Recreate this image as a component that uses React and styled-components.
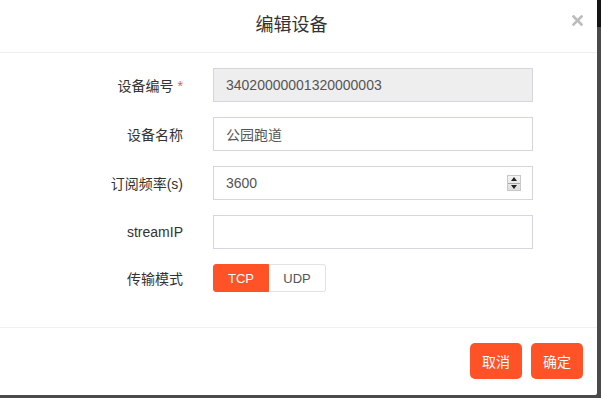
import React, { useState } from "react";
import styled, { createGlobalStyle } from "styled-components";

const GlobalStyle = createGlobalStyle`
  html, body { margin: 0; padding: 0; }
  body {
    font-family: "Liberation Sans", "Noto Sans CJK SC", Arial, sans-serif;
    background: #484848;
  }
  * { box-sizing: border-box; }
`;

const Page = styled.div`
  width: 601px;
  height: 398px;
  background: linear-gradient(#141414 0 27px, #4a4a4a 27px);
  overflow: hidden;
`;

const Dialog = styled.div`
  width: 597px;
  height: 395px;
  background: #fff;
  display: flex;
  flex-direction: column;
  border-bottom-right-radius: 2px;
`;

const Header = styled.div`
  position: relative;
  height: 53px;
  border-bottom: 1px solid #eeeeee;
  display: flex;
  align-items: center;
  justify-content: center;
  padding-bottom: 6px;
`;

const Title = styled.h3`
  margin: 0 0 0 -14px;
  font-size: 18px;
  font-weight: normal;
  color: #333;
`;

const Close = styled.button`
  position: absolute;
  right: 14px;
  top: 14px;
  width: 12px;
  height: 13px;
  padding: 0;
  border: 0;
  background: transparent;
  display: flex;
  align-items: center;
  justify-content: center;
  cursor: pointer;
`;

const Body = styled.div`
  flex: 1;
  padding-top: 15px;
  display: flex;
  flex-direction: column;
  gap: 15px;
  border-bottom: 1px solid #f0f0f0;
`;

const Row = styled.div`
  display: grid;
  grid-template-columns: 183px 320px;
  column-gap: 30px;
  align-items: center;
  height: ${(p) => p.$h || 34}px;
`;

const Label = styled.label`
  text-align: right;
  font-size: 14px;
  color: #333;
  white-space: nowrap;
`;

const Req = styled.span`
  color: #ff5630;
  margin-left: 4px;
`;

const InputBox = styled.div`
  height: 34px;
  border: 1px solid #d4d6df;
  background: ${(p) => (p.$disabled ? "#eeeeee" : "#fff")};
  display: flex;
  align-items: center;
  padding: 0 10px 0 12px;
`;

const Input = styled.input`
  flex: 1;
  min-width: 0;
  border: 0;
  outline: none;
  background: transparent;
  font-family: "Liberation Sans", "Noto Sans CJK SC", Arial, sans-serif;
  font-size: 14px;
  color: #555;
  padding: 0;
  height: 100%;
  &::-webkit-inner-spin-button,
  &::-webkit-outer-spin-button { -webkit-appearance: none; margin: 0; }
  -moz-appearance: textfield;
`;

const Spinner = styled.div`
  width: 14px;
  height: 16px;
  margin-right: 1px;
  border: 1px solid #c9c9c9;
  background: linear-gradient(#f4f4f4, #dedede);
  display: flex;
  flex-direction: column;
`;

const SpinHalf = styled.div`
  flex: 1;
  display: flex;
  align-items: center;
  justify-content: center;
  & + & { border-top: 1px solid #aaa; }
`;

const Group = styled.div`
  display: flex;
  height: 28px;
`;

const Opt = styled.button`
  width: ${(p) => p.$w}px;
  height: 28px;
  font-family: "Liberation Sans", "Noto Sans CJK SC", Arial, sans-serif;
  font-size: 13px;
  padding: 0;
  cursor: pointer;
  border: 1px solid ${(p) => (p.$active ? "#ff5226" : "#e2e2e2")};
  background: ${(p) => (p.$active ? "#ff5226" : "#fff")};
  color: ${(p) => (p.$active ? "#fff" : "#555")};
  &:first-child { border-radius: 3px 0 0 3px; }
  &:last-child { border-radius: 0 3px 3px 0; border-left: 0; }
`;

const Footer = styled.div`
  height: 67px;
  display: flex;
  justify-content: flex-end;
  align-items: flex-start;
  gap: 9px;
  padding: 15px 14px 0 0;
`;

const Btn = styled.button`
  width: 52px;
  height: 36px;
  border: 0;
  border-radius: 5px;
  background: #ff5226;
  color: #fff;
  font-family: "Noto Sans CJK SC", "Liberation Sans", sans-serif;
  font-size: 14px;
  cursor: pointer;
  padding: 0;
`;

export default function App() {
  const [mode, setMode] = useState("TCP");
  return (
    <Page>
      <GlobalStyle />
      <Dialog>
        <Header>
          <Title>编辑设备</Title>
          <Close aria-label="close">
            <svg width="11" height="11" viewBox="0 0 11 11">
              <path d="M1.5 1.5 L9.5 9.5 M9.5 1.5 L1.5 9.5" stroke="#bcbcbc" strokeWidth="2.6" strokeLinecap="square" />
            </svg>
          </Close>
        </Header>
        <Body>
          <Row>
            <Label>设备编号<Req>*</Req></Label>
            <InputBox $disabled>
              <Input disabled defaultValue="34020000001320000003" />
            </InputBox>
          </Row>
          <Row>
            <Label>设备名称</Label>
            <InputBox>
              <Input defaultValue="公园跑道" />
            </InputBox>
          </Row>
          <Row>
            <Label>订阅频率(s)</Label>
            <InputBox>
              <Input type="number" defaultValue="3600" />
              <Spinner>
                <SpinHalf>
                  <svg width="6" height="4" viewBox="0 0 6 4"><path d="M0 4 L3 0 L6 4Z" fill="#222" /></svg>
                </SpinHalf>
                <SpinHalf>
                  <svg width="6" height="4" viewBox="0 0 6 4"><path d="M0 0 L6 0 L3 4Z" fill="#222" /></svg>
                </SpinHalf>
              </Spinner>
            </InputBox>
          </Row>
          <Row>
            <Label>streamIP</Label>
            <InputBox>
              <Input defaultValue="" />
            </InputBox>
          </Row>
          <Row $h={28}>
            <Label>传输模式</Label>
            <Group>
              <Opt $w={56} $active={mode === "TCP"} onClick={() => setMode("TCP")}>TCP</Opt>
              <Opt $w={57} $active={mode === "UDP"} onClick={() => setMode("UDP")}>UDP</Opt>
            </Group>
          </Row>
        </Body>
        <Footer>
          <Btn>取消</Btn>
          <Btn>确定</Btn>
        </Footer>
      </Dialog>
    </Page>
  );
}
